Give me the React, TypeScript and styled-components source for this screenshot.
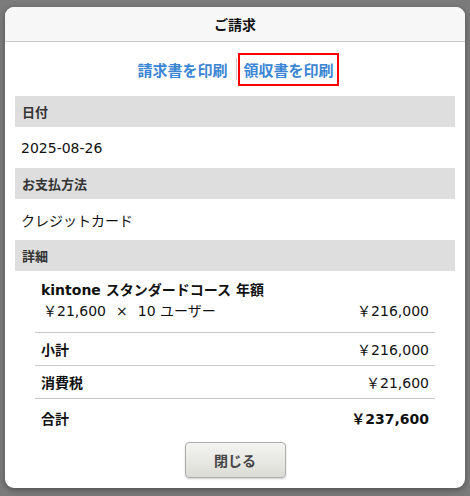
import React from "react";
import styled, { createGlobalStyle } from "styled-components";

const GlobalStyle = createGlobalStyle`
  html, body {
    margin: 0;
    padding: 0;
    background: #7b7b7b;
    font-family: "DejaVu Sans", "Noto Sans CJK JP", sans-serif;
  }
`;

const Overlay = styled.div`
  width: 470px;
  height: 496px;
  padding: 7px 5px 0;
  box-sizing: border-box;
  background: #7b7b7b;
`;

const Dialog = styled.div`
  width: 460px;
  height: 481px;
  background: #fff;
  border-radius: 9px;
  overflow: hidden;
  box-shadow: 0 2px 6px rgba(0, 0, 0, 0.35);
  display: flex;
  flex-direction: column;
`;

const Header = styled.div`
  height: 34px;
  flex-shrink: 0;
  background: #f7f7f7;
  border-bottom: 1px solid #c8c8c8;
  display: flex;
  align-items: center;
  justify-content: center;
  font-family: "Noto Sans CJK JP", sans-serif;
  font-size: 14px;
  font-weight: bold;
  color: #111;
`;

const Body = styled.div`
  padding: 0 10px;
  display: flex;
  flex-direction: column;
`;

const PrintLinks = styled.div`
  height: 54px;
  display: flex;
  align-items: center;
  justify-content: center;
`;

const PrintLink = styled.a<{ $active?: boolean }>`
  display: inline-block;
  font-family: "Noto Sans CJK JP", sans-serif;
  font-size: 15px;
  font-weight: bold;
  color: #3a86d4;
  text-decoration: none;
  cursor: pointer;
  line-height: 29px;
  padding: 0 3px 0 4px;
  border: 2px solid ${(p) => (p.$active ? "#ff0000" : "transparent")};
`;

const Separator = styled.span`
  width: 1px;
  height: 22px;
  background: #cfcfcf;
  margin: 0 1px 0 3px;
`;

const SectionHead = styled.div`
  height: 31px;
  background: #dedede;
  padding-left: 7px;
  display: flex;
  align-items: center;
  font-family: "Noto Sans CJK JP", sans-serif;
  font-size: 13px;
  font-weight: bold;
  color: #333;
`;

const SectionValue = styled.div`
  height: 41px;
  padding-left: 6px;
  display: flex;
  align-items: center;
  font-size: 14px;
  color: #111;
`;

const Details = styled.div`
  margin: 0 20px;
`;

const Item = styled.div`
  padding: 9px 6px 10px;
  border-bottom: 1px solid #c9c9c9;
`;

const ItemTitle = styled.div`
  font-size: 14px;
  font-weight: bold;
  color: #111;
  line-height: 21px;
`;

const ItemLine = styled.div`
  display: flex;
  justify-content: space-between;
  font-size: 14px;
  color: #111;
  line-height: 21px;
  padding-left: 2px;
`;

const Times = styled.span`
  margin: 0 10px;
`;

const SumRow = styled.div<{ $last?: boolean }>`
  height: ${(p) => (p.$last ? 38 : 32)}px;
  padding: 0 6px;
  display: flex;
  align-items: center;
  justify-content: space-between;
  font-size: 14px;
  color: #111;
  border-bottom: ${(p) => (p.$last ? "none" : "1px solid #c9c9c9")};
`;

const SumLabel = styled.span`
  font-family: "Noto Sans CJK JP", sans-serif;
  font-weight: bold;
`;

const SumValue = styled.span<{ $bold?: boolean }>`
  font-weight: ${(p) => (p.$bold ? "bold" : "normal")};
`;

const Footer = styled.div`
  display: flex;
  justify-content: center;
  padding-top: 5px;
`;

const CloseButton = styled.button`
  width: 101px;
  height: 36px;
  border: 1px solid #adadad;
  border-radius: 4px;
  background: linear-gradient(#f4f4f2, #dcdcd6);
  box-shadow: 0 1px 2px rgba(0, 0, 0, 0.2);
  font-family: "Noto Sans CJK JP", sans-serif;
  font-size: 14px;
  font-weight: bold;
  color: #444;
  cursor: pointer;
`;

const App: React.FC = () => {
  return (
    <>
      <GlobalStyle />
      <Overlay>
        <Dialog>
          <Header>ご請求</Header>
          <Body>
            <PrintLinks>
              <PrintLink>請求書を印刷</PrintLink>
              <Separator />
              <PrintLink $active>領収書を印刷</PrintLink>
            </PrintLinks>
            <SectionHead>日付</SectionHead>
            <SectionValue>2025-08-26</SectionValue>
            <SectionHead>お支払方法</SectionHead>
            <SectionValue>クレジットカード</SectionValue>
            <SectionHead>詳細</SectionHead>
            <Details>
              <Item>
                <ItemTitle>kintone スタンダードコース 年額</ItemTitle>
                <ItemLine>
                  <span>
                    ￥21,600<Times>×</Times>10 ユーザー
                  </span>
                  <span>￥216,000</span>
                </ItemLine>
              </Item>
              <SumRow>
                <SumLabel>小計</SumLabel>
                <SumValue>￥216,000</SumValue>
              </SumRow>
              <SumRow>
                <SumLabel>消費税</SumLabel>
                <SumValue>￥21,600</SumValue>
              </SumRow>
              <SumRow $last>
                <SumLabel>合計</SumLabel>
                <SumValue $bold>￥237,600</SumValue>
              </SumRow>
            </Details>
            <Footer>
              <CloseButton>閉じる</CloseButton>
            </Footer>
          </Body>
        </Dialog>
      </Overlay>
    </>
  );
};

export default App;
